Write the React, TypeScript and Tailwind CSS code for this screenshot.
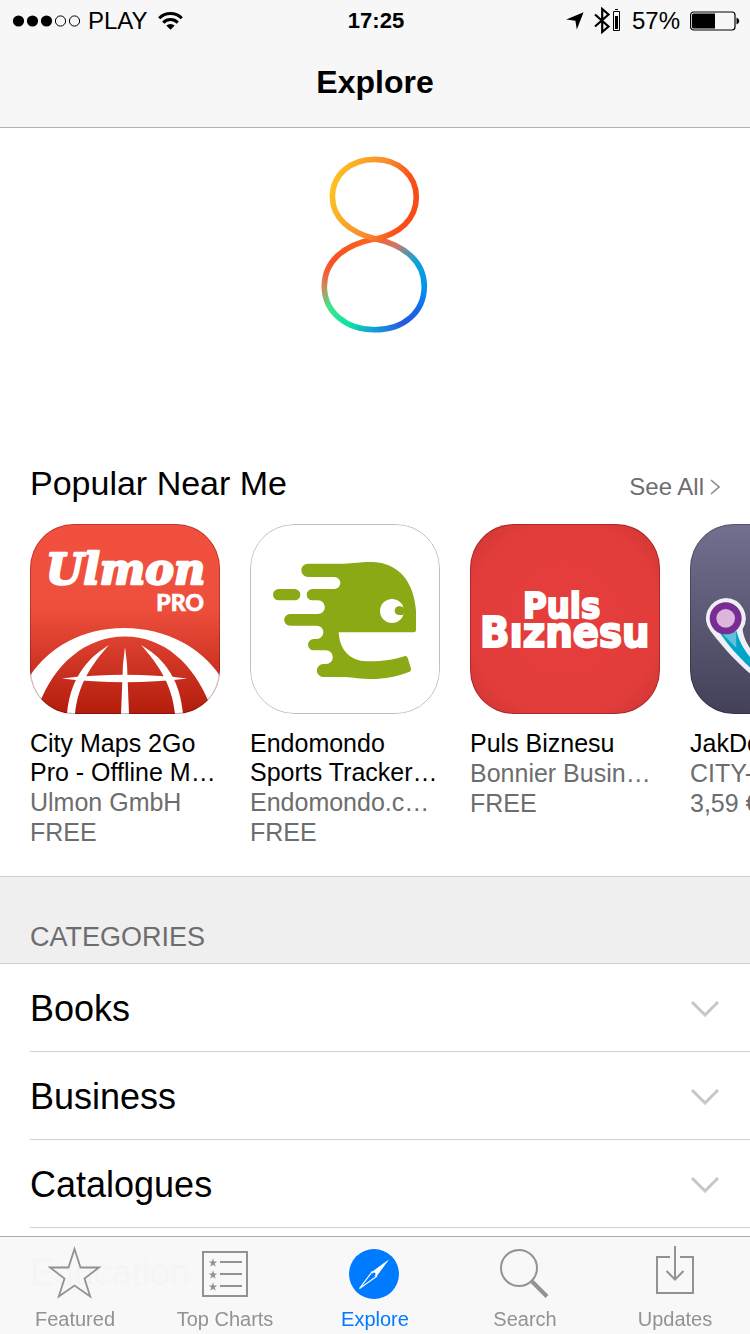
import React, { useState } from "react";

function SignalDots() {
  return (
    <svg className="h-3 w-[68px]" viewBox="0 0 68 12" aria-hidden="true">
      <circle cx="6.500" cy="6" r="5.6" />
      <circle cx="20.500" cy="6" r="5.6" />
      <circle cx="34.500" cy="6" r="5.6" />
      <circle cx="48.500" cy="6" r="5.1" fill="none" stroke="#000" />
      <circle cx="62.500" cy="6" r="5.1" fill="none" stroke="#000" />
    </svg>
  );
}

function WifiIcon() {
  return (
    <svg className="h-[18px] w-[25px]" viewBox="0 0 25 18" fill="none" stroke="#000" strokeWidth="3" aria-hidden="true">
      <path d="M1.200 6.200a16 16 0 0 1 22.600 0" />
      <path d="M5.200 10.600a10.400 10.400 0 0 1 14.600 0" />
      <path d="M12.500 17.800L8.300 13.600a6 6 0 0 1 8.400 0z" fill="#000" stroke="none" />
    </svg>
  );
}

function LocationIcon() {
  return (
    <svg className="h-[18px] w-[18px]" viewBox="0 0 18 18" aria-hidden="true">
      <path d="M17.6 .2L10.8 17.6L9.4 8.8L.2 7.4z" />
    </svg>
  );
}

function BluetoothIcon() {
  return (
    <svg className="h-[27px] w-[28px]" viewBox="0 0 28 27" fill="none" stroke="#000" aria-hidden="true">
      <path d="M1 7.5L14.5 19.5L8.2 25V2L14.5 7.5L1 19.5" strokeWidth="2.200" />
      <path d="M19.5 4.500h6v19h-6z" strokeWidth="1" />
      <path d="M21 2.5h3" strokeWidth="1" />
      <path d="M21 9h3v13h-3z" fill="#000" stroke="none" />
    </svg>
  );
}

function BatteryIcon() {
  return (
    <svg className="h-5 w-[50px]" viewBox="0 0 50 20" aria-hidden="true">
      <rect x=".6" y="1" width="44.4" height="18" rx="3" fill="none" stroke="#000" strokeWidth="1.2" />
      <path d="M3.5 2.5H25v15H3.5Q2 17.500 2 16V4Q2 2.500 3.500 2.500z" />
      <path d="M46.500 6.500q2.800 1 2.800 3.500t-2.800 3.500z" />
    </svg>
  );
}

function EightLogo() {
  return (
    <svg className="h-[180px] w-[110px]" viewBox="320 154 110 180" fill="none" strokeWidth="5.600" role="img" aria-label="iOS 8">
      <defs>
        <linearGradient id="top" gradientUnits="userSpaceOnUse" x1="332" y1="190" x2="412" y2="214">
          <stop offset="0" stopColor="#fcc020" />
          <stop offset=".2" stopColor="#fbab24" />
          <stop offset=".55" stopColor="#f98a2c" />
          <stop offset=".85" stopColor="#fa5219" />
          <stop offset="1" stopColor="#f94a18" />
        </linearGradient>
        <linearGradient id="lowA" gradientUnits="userSpaceOnUse" x1="374" y1="238" x2="324" y2="287">
          <stop offset="0" stopColor="#fb6420" />
          <stop offset=".65" stopColor="#fa5020" />
          <stop offset=".85" stopColor="#f0623a" />
          <stop offset="1" stopColor="#cc8a5c" />
        </linearGradient>
        <linearGradient id="lowB" gradientUnits="userSpaceOnUse" x1="324" y1="287" x2="375" y2="330">
          <stop offset="0" stopColor="#cc8a5c" />
          <stop offset=".24" stopColor="#40e48a" />
          <stop offset=".65" stopColor="#0de3a6" />
          <stop offset="1" stopColor="#159cd8" />
        </linearGradient>
        <linearGradient id="lowC" gradientUnits="userSpaceOnUse" x1="375" y1="330" x2="424" y2="287">
          <stop offset="0" stopColor="#159cd8" />
          <stop offset=".38" stopColor="#2858dc" />
          <stop offset=".7" stopColor="#1566ec" />
          <stop offset="1" stopColor="#0493ee" />
        </linearGradient>
        <linearGradient id="lowD" gradientUnits="userSpaceOnUse" x1="424" y1="287" x2="374" y2="238">
          <stop offset="0" stopColor="#0493ee" />
          <stop offset=".34" stopColor="#10a3da" />
          <stop offset=".54" stopColor="#6a8f9e" />
          <stop offset=".7" stopColor="#d3756a" />
          <stop offset="1" stopColor="#fb5d28" />
        </linearGradient>
      </defs>
      <path d="M324.300 286.500C324.300 262 343 245 374 239" stroke="url(#lowA)" />
      <path d="M324.300 286C324.300 312 346 329.800 375 329.800" stroke="url(#lowB)" />
      <path d="M374.500 329.800C404 329.800 424.300 312 424.300 286" stroke="url(#lowC)" />
      <path d="M424.300 286.500C424.300 262 405 245 374 238.500" stroke="url(#lowD)" />
      <path d="M374 238.500C350 232 332.400 218 332.400 197C332.400 175 350 159.400 375 159.400C399 159.400 416.300 176 416.300 197C416.300 219 400 234 374 239.500" stroke="url(#top)" />
    </svg>
  );
}

const artClass = "block h-full w-full";

function UlmonArt() {
  return (
    <svg className={artClass} viewBox="0 0 190 190" aria-hidden="true">
      <defs>
        <linearGradient id="ulmon" x1="0" y1="0" x2="0" y2="1">
          <stop offset="0" stopColor="#f2503e" />
          <stop offset=".45" stopColor="#ee4f3d" />
          <stop offset="1" stopColor="#b31c0c" />
        </linearGradient>
      </defs>
      <rect width="190" height="190" fill="url(#ulmon)" />
      <text x="16" y="60" fill="#fff" stroke="#fff" strokeWidth="2.400" strokeLinejoin="round" className="font-['DejaVu_Serif',serif] text-[43px] font-bold italic">Ulmon</text>
      <text x="174" y="87" textAnchor="end" fill="#fff" stroke="#fff" strokeWidth=".6" className="font-[Lato,sans-serif] text-[23px] font-black">PRO</text>
      <path d="M0 152C18 124 52 104 94 104S172 124 190 152V166L180 181C164 140 134 112.500 95 112.500S24 140 9 181L0 166z" fill="#fff" />
      <path d="M37 190C40 158 54 136 79 121C62 140 48 160 45 190z" fill="#fff" />
      <path d="M153 190C150 158 137 136 111 121C128 140 142 160 145 190z" fill="#fff" />
      <path d="M91 190L93 140L95 123L97 140L99 190z" fill="#fff" />
      <path d="M32 154.500Q95 147 157 154.500Q95 162 32 154.500z" fill="#fff" />
    </svg>
  );
}

function EndomondoArt() {
  return (
    <svg className={artClass} viewBox="30 30 570 570" aria-hidden="true">
      <rect x="30" y="30" width="570" height="570" fill="#fff" />
      <rect x="99" y="225" width="82" height="34" rx="17" fill="#8ba915" />
      <path
        d="M204 149H310C345 148 365 143 400 144C475 148 522 202 528 290V348Q528 355 521 355H296C299 410 332 441 380 442C425 443 462 437 495 426Q501 425 503 431L513 464Q514 471 507 474C470 488 430 496 385 495C350 494 330 489 310 489H250A19 19 0 0 1 250 450H258A20 20 0 0 0 258 409H221A17 17 0 0 1 221 375H230A19 19 0 0 0 230 335H150A17 17 0 0 1 150 300H234A20 20 0 0 0 234 259H217A17 17 0 0 1 217 225H283A18 18 0 0 0 283 189H204A20 20 0 0 1 204 149z"
        fill="#8ba915"
      />
      <circle cx="456" cy="291" r="36" fill="#fff" />
      <circle cx="477" cy="290" r="13" fill="#8ba915" />
      <path d="M478 277l12 2 4 11-4 13-12 0z" fill="#8ba915" />
    </svg>
  );
}

function PulsArt() {
  return (
    <svg className={artClass} viewBox="0 0 190 190" aria-hidden="true">
      <defs>
        <radialGradient id="puls" cx=".5" cy=".5" r=".7">
          <stop offset="0" stopColor="#e53e3c" />
          <stop offset=".7" stopColor="#e33d3b" />
          <stop offset="1" stopColor="#cc3534" />
        </radialGradient>
      </defs>
      <rect width="190" height="190" fill="url(#puls)" />
      <g fill="#fff" stroke="#fff" strokeWidth="2" className="font-['DejaVu_Sans_Condensed','DejaVu_Sans',sans-serif] font-bold">
        <text x="53" y="94" className="text-[36px]">Puls</text>
        <text x="10" y="123" className="text-[43px]">Bıznesu</text>
      </g>
    </svg>
  );
}

function JakArt() {
  return (
    <svg className={artClass} viewBox="690 30 570 570" aria-hidden="true">
      <defs>
        <linearGradient id="jak" x1="0" y1="0" x2="0" y2="1">
          <stop offset="0" stopColor="#72708f" />
          <stop offset="1" stopColor="#434059" />
        </linearGradient>
      </defs>
      <rect x="690" y="30" width="570" height="570" fill="url(#jak)" />
      <path d="M797 252A61 61 0 0 1 848 345C850 365 856 388 890 428V494C850 465 800 415 752 352A61 61 0 0 1 797 252z" fill="#f1eff6" />
      <path d="M780 358C808 398 840 435 890 478V452C855 415 838 385 830 352z" fill="#00a5c8" />
      <path d="M788 360L828 354L829 402z" fill="#62bfd8" />
      <circle cx="797" cy="313" r="48" fill="#772d94" />
      <circle cx="797" cy="313" r="28" fill="#dcb5dc" />
    </svg>
  );
}

const apps = [
  { name: ["City Maps 2Go", "Pro - Offline M…"], maker: "Ulmon GmbH", price: "FREE", Art: UlmonArt },
  { name: ["Endomondo", "Sports Tracker…"], maker: "Endomondo.c…", price: "FREE", Art: EndomondoArt },
  { name: ["Puls Biznesu"], maker: "Bonnier Busin…", price: "FREE", Art: PulsArt },
  { name: ["JakDojade"], maker: "CITY-NAV", price: "3,59 €", Art: JakArt },
];

const categories = ["Books", "Business", "Catalogues", "Education"];

const STAR = "M25 2L31.400 21H51L35 32.500L41.500 52L25 40L8.500 52L15 32.500L-1 21H18.600z";

const tabs = [
  {
    label: "Featured",
    icon: (
      <path d="M26.500 4L32.500 22.500H51L36.500 33.500L42.200 51.500L26.500 40.500L10.800 51.500L16.500 33.500L2 22.500H20.500z" fill="none" stroke="currentColor" strokeWidth="1.800" />
    ),
  },
  {
    label: "Top Charts",
    icon: (
      <g>
        <path d="M5 7h44v44H5z" fill="none" stroke="currentColor" strokeWidth="2" />
        <path d="M22 17h22M22 29h22M22 41h22" stroke="currentColor" strokeWidth="2" />
        {[13, 25, 37].map((y) => (
          <svg key={y} x="10.500" y={y} width="9" height="9" viewBox="-2 0 54 54">
            <path d={STAR} fill="currentColor" />
          </svg>
        ))}
      </g>
    ),
  },
  {
    label: "Explore",
    icon: (
      <g>
        <circle cx="26" cy="29" r="25" fill="currentColor" />
        <path d="M41 14.500L28.500 31.500L24 27z" fill="#fff" />
        <path d="M24 27L28.500 31.500L11.500 43.500z" fill="none" stroke="#fff" strokeWidth="1.200" />
        <path d="M41 14.500L24 27L25.500 28.500z" fill="#fff" />
        <circle cx="26" cy="29" r="1.600" fill="currentColor" />
      </g>
    ),
  },
  {
    label: "Search",
    icon: (
      <g fill="none" stroke="currentColor">
        <circle cx="21" cy="23" r="18" strokeWidth="2" />
        <path d="M34 36.500L49 51.500" strokeWidth="4" />
      </g>
    ),
  },
  {
    label: "Updates",
    icon: (
      <g fill="none" stroke="currentColor" strokeWidth="2">
        <path d="M22 12H9v36h36V12H32" />
        <path d="M27 1v33M18.500 26l8.500 8.500 8.500-8.500" />
      </g>
    ),
  },
];

export default function App() {
  const [active, setActive] = useState("Explore");
  return (
    <div className="h-screen overflow-y-auto bg-white font-['Liberation_Sans',Arial,sans-serif] text-black [scrollbar-width:none]">
      <header className="sticky top-0 z-10 border-b border-[#b2b2b2] bg-[#f7f7f7]">
        <div className="grid h-[41px] grid-cols-[1fr_auto_1fr] items-center pr-2.5 pl-3 text-2xl leading-10">
          <div className="flex items-center gap-2">
            <SignalDots />
            <span>PLAY</span>
            <span className="pl-0.5"><WifiIcon /></span>
          </div>
          <time className="text-[22px] font-bold">17:25</time>
          <div className="flex items-center justify-end gap-2.5">
            <LocationIcon />
            <BluetoothIcon />
            <span>57%</span>
            <BatteryIcon />
          </div>
        </div>
        <h1 className="pt-[21px] pb-[25px] text-center text-[32px] leading-10 font-bold">Explore</h1>
      </header>

      <main>
        <div className="flex justify-center pt-[26px] pb-[127px]">
          <EightLogo />
        </div>

        <section aria-labelledby="popular">
          <div className="flex items-baseline justify-between pr-[30px] pb-[19px] pl-[30px]">
            <h2 id="popular" className="text-[34px] leading-[44px]">Popular Near Me</h2>
            <a href="#all" className="flex items-center gap-1.5 text-2xl text-[#6d6d72]">
              See All
              <svg className="h-4 w-2.5" viewBox="0 0 10 16" fill="none" stroke="#8a8a8e" strokeWidth="1.600" aria-hidden="true">
                <path d="M1 1l8 7-8 7" />
              </svg>
            </a>
          </div>
          <ul className="flex gap-[30px] overflow-x-auto pb-[29px] pl-[30px] [scrollbar-width:none]">
            {apps.map(({ name, maker, price, Art }) => (
              <li key={maker} className="w-[190px] shrink-0 text-[25px] whitespace-nowrap">
                <div className="relative mb-[15px] h-[190px] overflow-hidden rounded-[44px]">
                  <Art />
                  <div className="absolute inset-0 rounded-[44px] border border-black/25" />
                </div>
                <h3 className="leading-[29px]">
                  {name.map((line) => (
                    <span key={line} className="block">{line}</span>
                  ))}
                </h3>
                <p className="leading-[30px] text-[#6d6d6d]">{maker}</p>
                <p className="leading-[30px] text-[#6d6d6d]">{price}</p>
              </li>
            ))}
          </ul>
        </section>

        <section aria-labelledby="categories">
          <h2 id="categories" className="border-y border-[#d0d0d0] bg-[#efefef] px-[30px] pt-[42px] pb-2 text-[27px] leading-9 text-[#6d6d6d]">
            CATEGORIES
          </h2>
          <ul className="pl-[30px]">
            {categories.map((c) => (
              <li key={c} className="border-b border-[#d2d2d2]">
                <button type="button" className="flex h-[87px] w-full items-center justify-between pt-0.5 pr-[30px] text-left text-4xl">
                  {c}
                  <svg className="h-4 w-[30px]" viewBox="0 0 30 16" fill="none" stroke="#c7c7c7" strokeWidth="3" aria-hidden="true">
                    <path d="M2 1l13 13L28 1" />
                  </svg>
                </button>
              </li>
            ))}
          </ul>
        </section>
      </main>

      <nav className="sticky bottom-0 z-10 grid grid-cols-5 border-t border-[#a9a9a9] bg-[#f8f8f8]/99">
        {tabs.map(({ label, icon }) => (
          <button
            key={label}
            type="button"
            aria-pressed={active === label}
            onClick={() => setActive(label)}
            className={`flex flex-col items-center pt-2 text-xl leading-[30px] ${active === label ? "text-[#007aff]" : "text-[#929292]"}`}
          >
            <svg className="h-[59px] w-[54px]" viewBox="0 0 54 59" aria-hidden="true">{icon}</svg>
            {label}
          </button>
        ))}
      </nav>
    </div>
  );
}
